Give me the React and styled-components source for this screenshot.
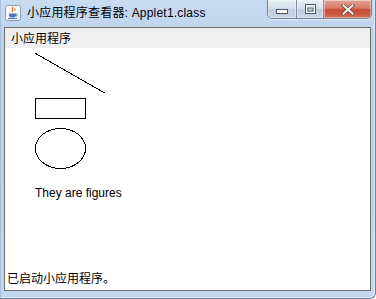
import React from "react";
import styled, { createGlobalStyle } from "styled-components";

const Global = createGlobalStyle`
  html, body { margin: 0; padding: 0; background: #ffffff; }
  #root { width: 376px; height: 299px; }
`;

const Window = styled.div`
  box-sizing: border-box;
  width: 376px;
  height: 299px;
  display: flex;
  flex-direction: column;
  padding: 0 4px 7px 4px;
  background: linear-gradient(180deg, #c9dbf1 0%, #bfd4ee 30px, #bcd2ed 60%, #c3d7f0 100%);
  border-right: 1px solid #6f849e;
  border-bottom: 1px solid #6f849e;
  border-bottom-right-radius: 6px;
  box-shadow: inset 1px 0 0 #a9bfdb, inset -1px -1px 0 #dce8f7;
`;

const TitleBar = styled.div`
  height: 27px;
  display: flex;
  align-items: flex-start;
  flex-shrink: 0;
`;

const IconBox = styled.div`
  width: 16px;
  height: 16px;
  margin: 5px 6px 0 1px;
  flex-shrink: 0;
`;

const TitleText = styled.div`
  font-family: "Liberation Sans", "Noto Sans CJK SC", sans-serif;
  font-size: 12px;
  letter-spacing: 0.2px;
  line-height: 16px;
  margin-top: 5px;
  color: #000;
  white-space: nowrap;
  flex: 1;
`;

const Buttons = styled.div`
  display: flex;
  height: 18px;
  border: 1px solid #6d7e94;
  border-top: none;
  border-radius: 0 0 5px 5px;
  overflow: hidden;
  margin-right: -1px;
  box-shadow: 0 1px 0 rgba(255,255,255,0.6);
`;

const CapButton = styled.div`
  width: ${(p) => p.$w}px;
  height: 100%;
  display: flex;
  align-items: center;
  justify-content: center;
  border-left: ${(p) => (p.$first ? "none" : "1px solid #7d8ea4")};
  background: ${(p) =>
    p.$close
      ? "linear-gradient(180deg, #e2a596 0%, #d67a66 45%, #c54c36 55%, #d26a52 100%)"
      : "linear-gradient(180deg, #e6edf6 0%, #d6e0ec 45%, #bccbdd 55%, #c9d6e5 100%)"};
  box-shadow: inset 0 0 0 1px rgba(255,255,255,0.45);
`;

const Client = styled.div`
  flex: 1;
  display: flex;
  flex-direction: column;
  border: 1px solid #6c6c6c;
  background: #ffffff;
  min-height: 0;
`;

const MenuBar = styled.div`
  height: 20px;
  line-height: 20px;
  background: #f0f0f0;
  padding-left: 6px;
  font-family: "Noto Sans CJK SC", sans-serif;
  font-size: 12px;
  color: #000;
  flex-shrink: 0;
`;

const AppletArea = styled.div`
  flex: 1;
  display: flex;
  flex-direction: column;
  background: #ffffff;
`;

const Figures = styled.svg`
  display: block;
  width: 110px;
  height: 138px;
  flex-shrink: 0;
`;

const Caption = styled.div`
  font-family: "Liberation Sans", Arial, sans-serif;
  font-size: 12px;
  line-height: 14px;
  margin-left: 30px;
  color: #000;
`;

const Spacer = styled.div`
  flex: 1;
`;

const Status = styled.div`
  height: 20px;
  line-height: 16px;
  padding-left: 2px;
  font-family: "Noto Sans CJK SC", sans-serif;
  font-size: 12px;
  color: #000;
`;

function JavaIcon() {
  return (
    <svg width="16" height="16" viewBox="0 0 16 16">
      <rect x="0.5" y="0.5" width="15" height="15" rx="2" fill="#f4f6f9" stroke="#8c9bb0" />
      <path d="M8 2 C6 4 9 5 7 7" stroke="#e0741c" strokeWidth="1.2" fill="none" />
      <path d="M10 3 C9 4 10.5 5 9.5 6" stroke="#e0741c" strokeWidth="1" fill="none" />
      <path d="M4 8.5 H11 V10.5 C11 12 9.5 12.5 7.5 12.5 C5.5 12.5 4 12 4 10.5 Z" fill="#4a78b5" />
      <path d="M11 9 C13 9 13 11 11 11" stroke="#4a78b5" strokeWidth="1" fill="none" />
      <path d="M3 13.5 H12" stroke="#4a78b5" strokeWidth="1" />
    </svg>
  );
}

function MinGlyph() {
  return (
    <svg width="12" height="6" viewBox="0 0 12 6" style={{ marginTop: 5 }}>
      <rect x="0.5" y="0.5" width="11" height="4" fill="#fff" stroke="#4a5668" />
    </svg>
  );
}

function MaxGlyph() {
  return (
    <svg width="11" height="10" viewBox="0 0 11 10">
      <rect x="0.5" y="0.5" width="10" height="9" fill="none" stroke="#4a5668" />
      <rect x="1.5" y="1.5" width="8" height="7" fill="none" stroke="#fff" />
      <rect x="3" y="4" width="5" height="3" fill="#c8d4e2" stroke="#4a5668" strokeWidth="0.8" />
    </svg>
  );
}

function CloseGlyph() {
  return (
    <svg width="14" height="11" viewBox="0 0 14 11">
      <path d="M2.5 1.5 L11.5 9.5 M11.5 1.5 L2.5 9.5" stroke="#7a4038" strokeWidth="3.6" strokeLinecap="square" />
      <path d="M2.5 1.5 L11.5 9.5 M11.5 1.5 L2.5 9.5" stroke="#f4f4f4" strokeWidth="2" strokeLinecap="square" />
    </svg>
  );
}

export default function App() {
  return (
    <>
      <Global />
      <Window>
        <TitleBar>
          <IconBox>
            <JavaIcon />
          </IconBox>
          <TitleText>小应用程序查看器: Applet1.class</TitleText>
          <Buttons>
            <CapButton $w={28} $first>
              <MinGlyph />
            </CapButton>
            <CapButton $w={26}>
              <MaxGlyph />
            </CapButton>
            <CapButton $w={47} $close>
              <CloseGlyph />
            </CapButton>
          </Buttons>
        </TitleBar>
        <Client>
          <MenuBar>小应用程序</MenuBar>
          <AppletArea>
            <Figures viewBox="0 0 110 138" shapeRendering="crispEdges">
              <line x1="30.5" y1="5.5" x2="100.5" y2="45.5" stroke="#000" strokeWidth="1" />
              <rect x="30.5" y="50.5" width="50" height="20" fill="none" stroke="#000" strokeWidth="1" />
              <ellipse cx="55.5" cy="100.5" rx="25" ry="20" fill="none" stroke="#000" strokeWidth="1" />
            </Figures>
            <Caption>They are figures</Caption>
            <Spacer />
            <Status>已启动小应用程序。</Status>
          </AppletArea>
        </Client>
      </Window>
    </>
  );
}
